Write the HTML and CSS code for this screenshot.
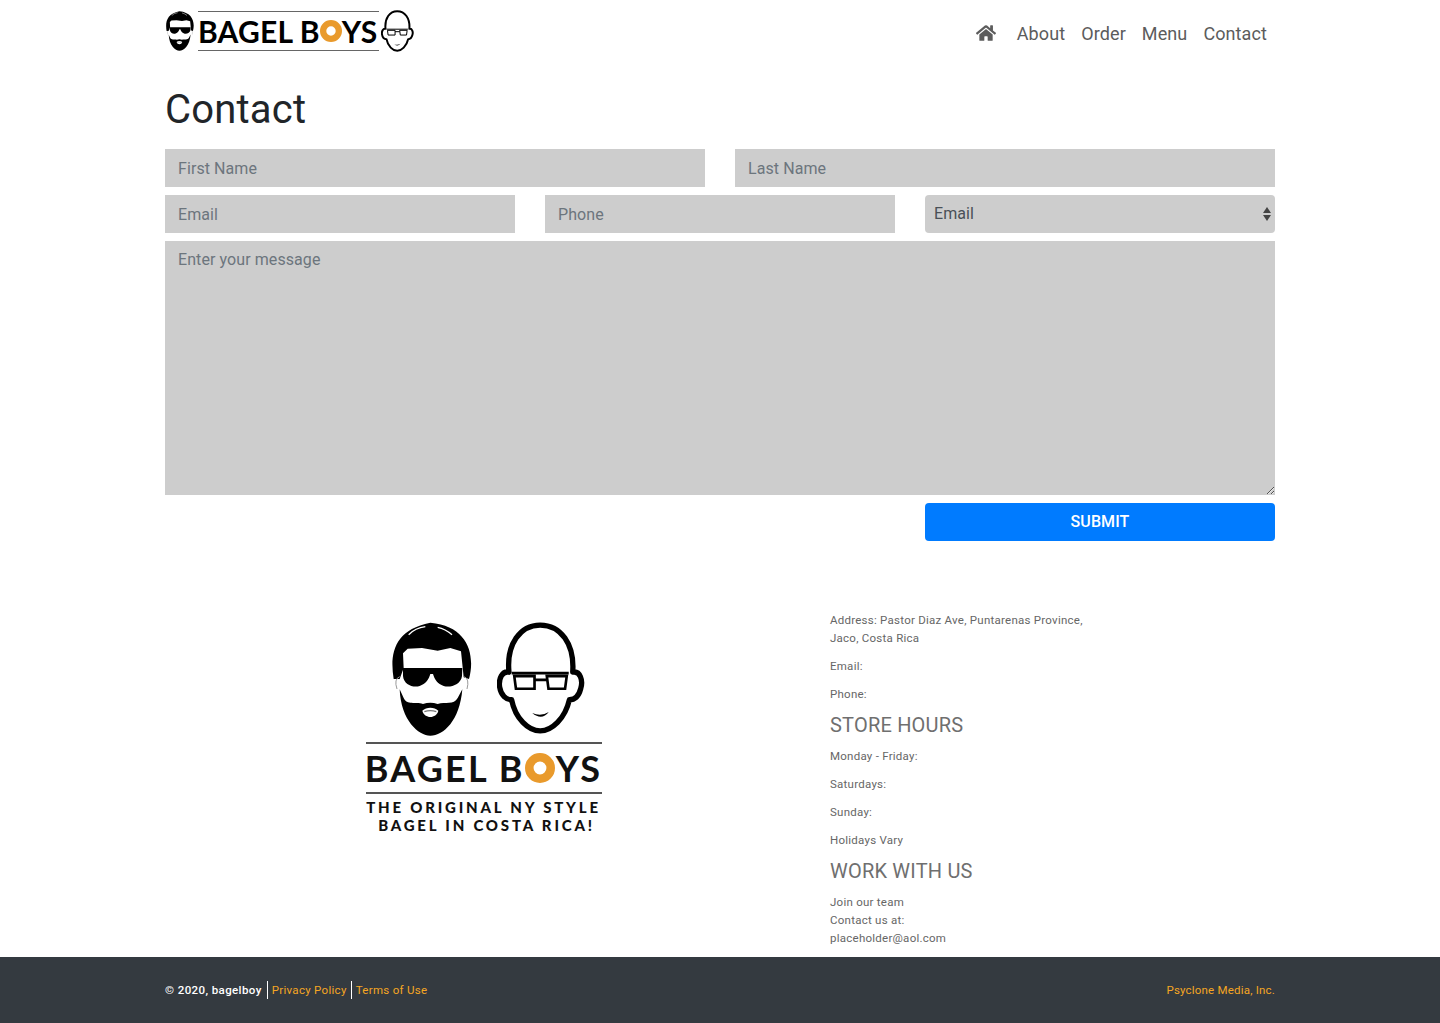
FILE: index.html
```html
<!DOCTYPE html>
<html lang="en">
<head>
    <meta charset="UTF-8">
    <meta name="viewport" content="width=device-width, initial-scale=1.0">
    <title>Contact - Bagel Boys</title>
    <link rel="stylesheet" href="styles.css">
</head>
<body>

    <!-- Shared logo drawings -->
    <svg class="defs" width="0" height="0" aria-hidden="true">
        <symbol id="face-beard" viewBox="125 35 240 340">
            <path fill="#000" d="M130 205C118 130 130 58 240 36C352 46 376 130 356 205L340 200L332 122L300 112L262 120L215 112L172 114L158 128L160 172L148 205Z"/>
            <path fill="none" stroke="#fff" stroke-width="4" d="M175 72Q195 52 225 48M305 72Q285 55 262 50"/>
            <path fill="#000" d="M158 172H336L335 196C332 222 300 232 280 226C262 220 252 205 248 190H240C236 205 226 220 208 226C188 232 160 222 158 196Z"/>
            <path fill="none" stroke="#999" stroke-width="3" d="M148 198Q130 205 140 235M342 198Q358 205 350 235"/>
            <path fill="#000" d="M148 236C152 330 205 375 240 375C280 375 328 330 336 236L322 262C310 285 285 272 262 280Q240 272 218 280C195 272 170 285 160 262Z"/>
            <path fill="#fff" d="M216 300C228 288 252 288 264 300C258 325 222 325 216 300Z"/>
            <path fill="none" stroke="#777" stroke-width="4" d="M222 303Q240 297 258 303"/>
        </symbol>
        <symbol id="face-bald" viewBox="440 35 265 335">
            <path fill="none" stroke="#000" stroke-width="16" stroke-linejoin="round" d="M476 185C468 100 510 43 570 43C632 43 674 100 668 185C690 180 700 210 692 235C686 258 672 268 658 268C645 325 605 362 570 362C535 362 495 325 484 268C468 268 452 255 448 230C444 205 456 180 476 185Z"/>
            <path fill="none" stroke="#000" stroke-width="8" d="M484 188H656M492 197H553V235H497ZM590 197H650L645 235H595ZM553 208H590"/>
            <path fill="#000" d="M546 308Q572 320 596 305Q575 332 546 308Z"/>
        </symbol>
        <symbol id="donut" viewBox="0 0 28 28">
            <circle cx="14" cy="14" r="10" fill="none" stroke="#e99a2c" stroke-width="8"/>
        </symbol>
    </svg>

    <!-- Navbar -->
    <header class="container navbar">
        <a class="brand" href="#">
            <svg class="brand-face-left"><use href="#face-beard"/></svg>
            <span class="brand-name">BAGEL B<svg class="donut"><use href="#donut"/></svg>YS</span>
            <svg class="brand-face-right"><use href="#face-bald"/></svg>
        </a>
        <nav class="nav-links">
            <a class="nav-home" href="#" aria-label="Home">
                <svg viewBox="0 0 576 512"><path d="M280.37 148.26L96 300.11V464a16 16 0 0 0 16 16l112.06-.29a16 16 0 0 0 15.92-16V368a16 16 0 0 1 16-16h64a16 16 0 0 1 16 16v95.64a16 16 0 0 0 16 16.05L464 480a16 16 0 0 0 16-16V300L295.67 148.26a12.19 12.19 0 0 0-15.3 0zM571.6 251.47L488 182.56V44.05a12 12 0 0 0-12-12h-56a12 12 0 0 0-12 12v72.61L318.47 43a48 48 0 0 0-61 0L4.34 251.47a12 12 0 0 0-1.6 16.9l25.5 31A12 12 0 0 0 45.15 301l235.22-193.74a12.19 12.19 0 0 1 15.3 0L530.9 301a12 12 0 0 0 16.9-1.6l25.5-31a12 12 0 0 0-1.7-16.93z"/></svg>
            </a>
            <a href="#">About</a>
            <a href="#">Order</a>
            <a href="#">Menu</a>
            <a href="#">Contact</a>
        </nav>
    </header>

    <!-- Contact form -->
    <main class="container">
        <h1>Contact</h1>
        <form class="contact-form">
            <div class="form-row two">
                <input type="text" placeholder="First Name">
                <input type="text" placeholder="Last Name">
            </div>
            <div class="form-row three">
                <input type="text" placeholder="Email">
                <input type="text" placeholder="Phone">
                <div class="select-wrap">
                    <select>
                        <option>Email</option>
                        <option>Phone</option>
                    </select>
                    <span class="arrow-up"></span>
                    <span class="arrow-down"></span>
                </div>
            </div>
            <textarea placeholder="Enter your message"></textarea>
            <div class="form-row three">
                <button type="submit">SUBMIT</button>
            </div>
        </form>

        <!-- Store info -->
        <section class="info">
            <div class="info-logo">
                <div class="faces">
                    <svg class="big-face-left"><use href="#face-beard"/></svg>
                    <svg class="big-face-right"><use href="#face-bald"/></svg>
                </div>
                <div class="big-name">BAGEL B<svg class="big-donut"><use href="#donut"/></svg>YS</div>
                <div class="tagline">THE ORIGINAL NY STYLE</div>
                <div class="tagline second">BAGEL IN COSTA RICA!</div>
            </div>
            <div class="info-text">
                <p>Address: Pastor Diaz Ave, Puntarenas Province,<br>Jaco, Costa Rica</p>
                <p>Email:</p>
                <p>Phone:</p>
                <h4>STORE HOURS</h4>
                <p>Monday - Friday:</p>
                <p>Saturdays:</p>
                <p>Sunday:</p>
                <p>Holidays Vary</p>
                <h4>WORK WITH US</h4>
                <p>Join our team<br>Contact us at:<br>placeholder@aol.com</p>
            </div>
        </section>
    </main>

    <!-- Footer -->
    <footer class="site-footer">
        <div class="container footer-inner">
            <div class="footer-left">
                <span class="copyright">© 2020, bagelboy</span>
                <a href="#">Privacy Policy</a>
                <a href="#">Terms of Use</a>
            </div>
            <a href="#">Psyclone Media, Inc.</a>
        </div>
    </footer>

</body>
</html>
```

FILE: styles.css
```css
* {
    margin: 0;
    padding: 0;
    box-sizing: border-box;
}

body {
    font-family: Roboto, Arial, sans-serif;
    background-color: #fff;
    color: #212529;
}

a {
    text-decoration: none;
}

svg {
    flex-shrink: 0;
}

.defs {
    position: absolute;
}

.container {
    width: 1110px;
    margin: 0 auto;
}

/* Navbar */
.navbar {
    display: flex;
    justify-content: space-between;
    height: 72px;
}

.brand {
    display: flex;
    align-items: flex-start;
    padding-top: 10px;
    margin-left: 1px;
    color: #000;
}

.brand-face-left {
    width: 28px;
    height: 42px;
    margin-right: 4px;
}

.brand-face-right {
    width: 33px;
    height: 42px;
    margin-left: 2px;
}

.brand-name {
    display: flex;
    align-items: center;
    width: 181px;
    height: 40px;
    margin-top: 1px;
    border-top: 1px solid #666;
    border-bottom: 1px solid #666;
    font-family: Lato, Arial, sans-serif;
    font-size: 30px;
    font-weight: 700;
    letter-spacing: 0.2px;
    white-space: nowrap;
}

.donut {
    width: 22px;
    height: 22px;
}

.nav-links {
    display: flex;
    align-items: center;
    height: 66px;
}

.nav-links a {
    padding: 0 8px;
    color: #5c5c5c;
    font-size: 18px;
    letter-spacing: 0.1px;
}

.nav-links .nav-home {
    display: flex;
    padding: 0 13px 0 0;
}

.nav-home svg {
    width: 20px;
    height: 18px;
    fill: #5c5c5c;
}

/* Contact form */
h1 {
    height: 77px;
    padding-top: 14px;
    font-size: 40px;
    font-weight: 400;
    line-height: 48px;
    letter-spacing: 0.2px;
}

.form-row {
    display: grid;
    gap: 30px;
    margin-bottom: 8px;
}

.two {
    grid-template-columns: 1fr 1fr;
}

.three {
    grid-template-columns: repeat(3, 1fr);
}

input, textarea, select, button {
    font-family: inherit;
    font-size: 16px;
    letter-spacing: 0.08px;
}

input, textarea {
    display: block;
    width: 100%;
    border: none;
    border-radius: 0;
    background-color: #cdcdcd;
    color: #495057;
    padding: 0 13px;
    outline: none;
}

input {
    height: 38px;
}

textarea {
    height: 254px;
    padding-top: 9px;
    margin-bottom: 8px;
}

input::placeholder, textarea::placeholder {
    color: #6c757d;
    opacity: 1;
}

.select-wrap {
    position: relative;
}

select {
    display: block;
    width: 100%;
    height: 38px;
    padding: 0 9px 2px;
    border: none;
    border-radius: 4px;
    background-color: #cdcdcd;
    color: #495057;
    appearance: none;
}

.arrow-up, .arrow-down {
    position: absolute;
    right: 4px;
    width: 0;
    height: 0;
    border-left: 4px solid transparent;
    border-right: 4px solid transparent;
}

.arrow-up {
    top: 12px;
    border-bottom: 6px solid #444;
}

.arrow-down {
    top: 20px;
    border-top: 6px solid #444;
}

button {
    grid-column: 3;
    height: 38px;
    padding-bottom: 2px;
    border: none;
    border-radius: 4px;
    background-color: #007bff;
    color: #fff;
    font-weight: 500;
}

/* Store info */
.info {
    display: grid;
    grid-template-columns: 637px 1fr;
    gap: 28px;
    padding-top: 62px;
}

.info-logo {
    display: flex;
    flex-direction: column;
    align-items: center;
    padding-top: 11px;
    color: #111;
}

.faces {
    display: flex;
    gap: 25px;
    height: 120px;
    margin-left: 9px;
}

.big-face-left {
    width: 80px;
    height: 114px;
}

.big-face-right {
    width: 88px;
    height: 112px;
}

.big-name {
    display: flex;
    align-items: center;
    justify-content: center;
    width: 236px;
    height: 52px;
    border-top: 2px solid #555;
    border-bottom: 2px solid #555;
    font-family: Lato, Arial, sans-serif;
    font-size: 36px;
    font-weight: 700;
    letter-spacing: 2.2px;
    white-space: nowrap;
}

.big-donut {
    width: 30px;
    height: 30px;
    margin-right: 1px;
}

.tagline {
    margin-top: 4px;
    font-family: Lato, Arial, sans-serif;
    font-size: 15px;
    font-weight: 900;
    letter-spacing: 2.8px;
    line-height: 18px;
    white-space: nowrap;
}

.tagline.second {
    margin-top: 0;
    margin-left: 6px;
}

.info-text {
    color: #666;
    font-size: 11.5px;
    line-height: 18px;
    letter-spacing: 0.25px;
}

.info-text p {
    margin-bottom: 10px;
}

h4 {
    margin-bottom: 10px;
    color: #6f6f6f;
    font-size: 20px;
    font-weight: 400;
    line-height: 24px;
    letter-spacing: 0.2px;
}

/* Footer */
.site-footer {
    height: 66px;
    background-color: #343a40;
    font-size: 11.5px;
    letter-spacing: 0.2px;
}

.footer-inner {
    display: flex;
    justify-content: space-between;
    align-items: center;
    height: 66px;
}

.footer-left {
    display: flex;
    align-items: center;
}

.site-footer a {
    color: #f5a623;
}

.copyright {
    color: #fff;
    font-weight: 500;
    padding-right: 5px;
    letter-spacing: 0.4px;
}

.footer-left a {
    border-left: 1px solid #fff;
    padding: 2px 4px;
    line-height: 14px;
    letter-spacing: 0.3px;
}
```
